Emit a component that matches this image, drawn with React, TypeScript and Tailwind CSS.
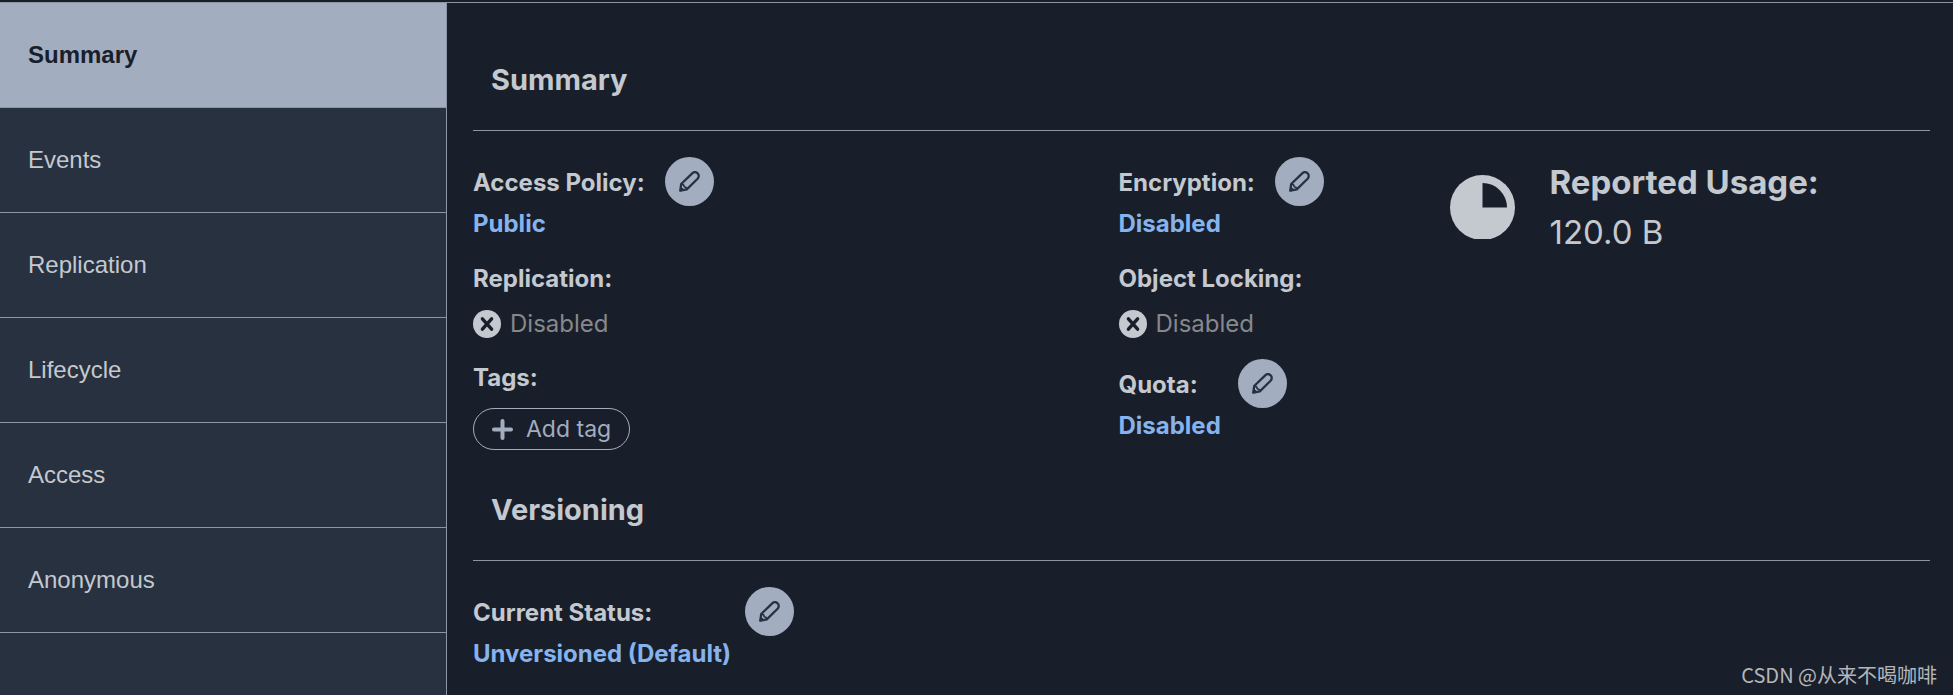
import React from 'react';

interface NavItem {
  label: string;
  active?: boolean;
}

const navItems: NavItem[] = [
  { label: 'Summary', active: true },
  { label: 'Events' },
  { label: 'Replication' },
  { label: 'Lifecycle' },
  { label: 'Access' },
  { label: 'Anonymous' },
];

const EditButton: React.FC<{ label: string }> = ({ label }) => (
  <button
    type="button"
    aria-label={label}
    className="flex size-[49px] shrink-0 items-center justify-center rounded-full bg-[#a3adc0] text-[#283140]"
  >
    <svg width="21" height="21" viewBox="0 0 21 21" fill="none" stroke="currentColor" strokeWidth="2.3" strokeLinejoin="round">
      <path d="M2.2 13 L13.2 2.4 C14.8 0.9 17 0.8 18.6 2.3 C20.1 3.8 20.1 6.2 18.6 7.7 L7.8 18.4 L1.3 19.7 Z" />
      <path d="M2.6 13.4 L4.6 13.8 L5.2 15.8 L7.2 16.4 L7.4 18" strokeWidth="1.6" />
      <path d="M1.8 15.8 L5 19 L1 20 Z" fill="currentColor" strokeWidth="1" />
    </svg>
  </button>
);

const Label: React.FC<{ children: React.ReactNode }> = ({ children }) => (
  <div className="pt-0.5 font-bold">{children}</div>
);

const Value: React.FC<{ children: React.ReactNode }> = ({ children }) => (
  <a href="#" className="mt-0.5 block w-fit font-bold text-[#85b3ee]">
    {children}
  </a>
);

const DisabledStatus: React.FC = () => (
  <div className="mt-[13px] flex items-center gap-[9px] text-[#87888c]">
    <svg width="28" height="28" viewBox="0 0 28 28">
      <circle cx="14" cy="14" r="14" fill="#c4c8cf" />
      <path d="M9.4 8.8 L18.6 19.2 M18.6 8.8 L9.4 19.2" stroke="#191f2a" strokeWidth="3.4" strokeLinecap="round" />
    </svg>
    Disabled
  </div>
);

const SectionTitle: React.FC<{ children: React.ReactNode }> = ({ children }) => (
  <h2 className="border-b border-[#8d95a5] px-[18px] pt-10 pb-[30px] text-[29px] leading-10 font-bold">
    {children}
  </h2>
);

const App: React.FC = () => {
  return (
    <div className="relative flex min-h-screen flex-col bg-[#191f2a] pt-0.5 font-['Inter',sans-serif] text-2xl leading-8 text-[#c4c8cf]">
      <div className="flex flex-1 border-t border-[#8d95a5]">
        <nav className="w-[447px] shrink-0 border-r border-[#8d95a5] bg-[#283140] font-['Liberation_Sans',sans-serif]">
          {navItems.map((item) => (
            <a
              key={item.label}
              href="#"
              className={
                item.active
                  ? 'flex h-[105px] items-center border-b border-[#8d95a5] bg-[#a3adc0] px-7 font-bold text-[#191f2a]'
                  : 'flex h-[105px] items-center border-b border-[#8d95a5] px-7'
              }
            >
              {item.label}
            </a>
          ))}
        </nav>

        <main className="flex-1 pt-[17px] pr-[23px] pl-[26px]">
          <SectionTitle>Summary</SectionTitle>
          <div className="grid grid-cols-[35fr_18fr_26fr] pt-[26px]">
            <div>
              <div className="flex items-center gap-5">
                <Label>Access Policy:</Label>
                <EditButton label="Edit access policy" />
              </div>
              <Value>Public</Value>
              <div className="mt-[21px]">
                <Label>Replication:</Label>
                <DisabledStatus />
              </div>
              <div className="mt-5">
                <Label>Tags:</Label>
              </div>
              <button
                type="button"
                className="mt-3.5 flex h-[42px] items-center gap-[13px] rounded-full border border-[#a3adc0] px-[18px] text-[23px] text-[#a3adc0]"
              >
                <svg width="21" height="21" viewBox="0 0 21 21" stroke="currentColor" strokeWidth="4" strokeLinecap="round">
                  <path d="M10.5 2 V19 M2 10.5 H19" />
                </svg>
                Add tag
              </button>
            </div>

            <div>
              <div className="flex items-center gap-5">
                <Label>Encryption:</Label>
                <EditButton label="Edit encryption" />
              </div>
              <Value>Disabled</Value>
              <div className="mt-[21px]">
                <Label>Object Locking:</Label>
                <DisabledStatus />
              </div>
              <div className="mt-[19px] flex items-center gap-10">
                <Label>Quota:</Label>
                <EditButton label="Edit quota" />
              </div>
              <Value>Disabled</Value>
            </div>

            <div className="flex items-center gap-[34px] self-start text-[33px] leading-[50px]">
              <svg width="65" height="64" viewBox="0 0 65 64" className="shrink-0">
                <circle cx="32.5" cy="32.5" r="32.5" fill="#c4c8cf" />
                <path d="M32.5 8 V32.5 H57 A24.5 24.5 0 0 0 32.5 8 Z" fill="#191f2a" />
              </svg>
              <div>
                <div className="font-bold">Reported Usage:</div>
                <div>120.0 B</div>
              </div>
            </div>
          </div>

          <SectionTitle>Versioning</SectionTitle>
          <div className="pt-[26px]">
            <div className="flex w-[321px] items-center justify-between">
              <Label>Current Status:</Label>
              <EditButton label="Edit versioning status" />
            </div>
            <Value>Unversioned (Default)</Value>
          </div>
        </main>
      </div>

      <div className="absolute right-4 bottom-1.5 font-['Noto_Sans_CJK_SC',sans-serif] text-xl text-[#b4b6ba]">
        CSDN @从来不喝咖啡
      </div>
    </div>
  );
};

export default App;
